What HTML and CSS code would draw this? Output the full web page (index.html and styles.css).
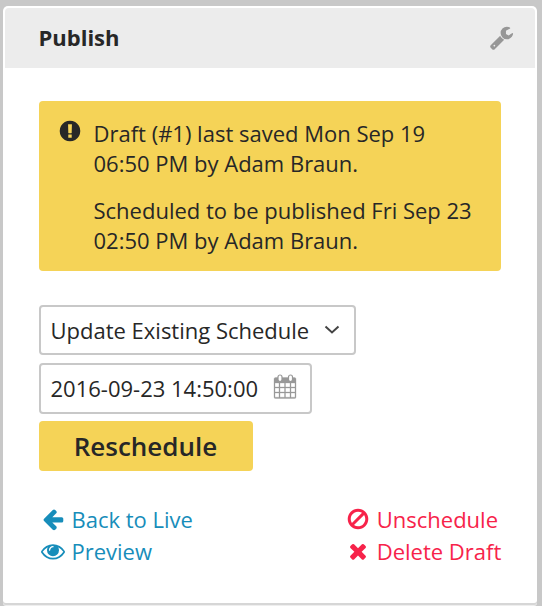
FILE: index.html
```html
<!DOCTYPE html>
<html lang="en">
<head>
<meta charset="utf-8">
<title>Publish</title>
<link rel="stylesheet" href="styles.css">
</head>
<body>
<section class="panel">
  <header class="panel-head">
    <h2>Publish</h2>
    <svg class="wrench" viewBox="0 0 1792 1792"><path d="M448 1472q0-26-19-45t-45-19-45 19-19 45 19 45 45 19 45-19 19-45zm644-420l-682 682q-37 37-90 37-52 0-91-37l-106-108q-38-36-38-90 0-53 38-91l681-681q39 98 114.500 173.500t173.500 114.500zm634-435q0 39-23 106-47 134-164.500 217.500t-258.500 83.500q-185 0-316.500-131.500t-131.500-316.500 131.500-316.500 316.500-131.500q58 0 121.500 16.500t107.500 46.500q16 11 16 28t-16 28l-293 169v224l193 107q5-3 79-48.500t135.500-81 70.500-35.500q15 0 23.500 10t8.500 25z"/></svg>
  </header>
  <div class="panel-body">
    <div class="alert">
      <svg class="alert-icon" viewBox="0 0 1792 1792"><path d="M896 128q209 0 385.500 103t279.500 279.500 103 385.500-103 385.500-279.500 279.500-385.500 103-385.500-103-279.500-279.500-103-385.500 103-385.500 279.500-279.500 385.500-103zm128 1247v-190q0-14-9-23.500t-22-9.500h-192q-13 0-23 10t-10 23v190q0 13 10 23t23 10h192q13 0 22-9.500t9-23.500zm-2-344l18-621q0-12-10-18-10-8-24-8h-220q-14 0-24 8-10 6-10 18l17 621q0 10 10 17.500t24 7.500h185q14 0 23.500-7.500t10.500-17.500z"/></svg>
      <div class="alert-text">
        <p>Draft (#1) last saved Mon Sep 19<br>06:50 PM by Adam Braun.</p>
        <p>Scheduled to be published Fri Sep 23<br>02:50 PM by Adam Braun.</p>
      </div>
    </div>
    <div class="field select">
      <span>Update Existing Schedule</span>
      <svg class="chevron" viewBox="0 0 16 10"><path d="M1.500 1.500 8 7.500 14.500 1.500"/></svg>
    </div>
    <div class="field date">
      <span>2016-09-23 14:50:00</span>
      <svg class="calendar" viewBox="0 0 24 26">
        <path class="cal-frame" fill-rule="evenodd" d="M2.500 3.500h19a1.500 1.500 0 0 1 1.500 1.500v18a1.500 1.500 0 0 1-1.500 1.500h-19A1.500 1.500 0 0 1 1 23V5a1.500 1.500 0 0 1 1.500-1.500zM2 9v4h4V9zM7 9v4h4.500V9zM12.500 9v4H17V9zM18 9v4h4V9zM2 14v4h4v-4zM7 14v4h4.500v-4zM12.500 14v4H17v-4zM18 14v4h4v-4zM2 19v4.200h4V19zM7 19v4.200h4.500V19zM12.500 19v4.200H17V19zM18 19v4.200h4V19z"/>
        <rect class="cal-ring" x="5" y="1" width="4" height="6.500" rx="2"/>
        <rect class="cal-ring" x="15.500" y="1" width="4" height="6.500" rx="2"/>
      </svg>
    </div>
    <button class="primary" type="button">Reschedule</button>
    <div class="links">
      <div class="link-col safe">
        <a><svg viewBox="0 0 1792 1792"><path d="M1664 896v128q0 53-32.500 90.500t-84.500 37.500h-704l293 294q38 36 38 90t-38 90l-75 76q-37 37-90 37-52 0-91-37l-651-652q-37-37-37-90 0-52 37-91l651-650q38-38 91-38 52 0 90 38l75 74q38 38 38 91t-38 91l-293 293h704q52 0 84.500 37.500t32.500 90.500z"/></svg><span>Back to Live</span></a>
        <a><svg viewBox="0 0 1792 1792"><path d="M1664 960q-152-236-381-353 61 104 61 225 0 185-131.500 316.500t-316.500 131.500-316.500-131.500-131.500-316.500q0-121 61-225-229 117-381 353 133 205 333.500 326.500t434.500 121.500 434.500-121.500 333.500-326.500zm-720-384q0-20-14-34t-34-14q-125 0-214.500 89.500t-89.500 214.500q0 20 14 34t34 14 34-14 14-34q0-86 61-147t147-61q20 0 34-14t14-34zm848 384q0 34-20 69-140 230-376.500 368.500t-499.500 138.500-499.500-139-376.500-368q-20-35-20-69t20-69q140-229 376.500-368t499.500-139 499.500 139 376.500 368q20 35 20 69z"/></svg><span>Preview</span></a>
      </div>
      <div class="link-col danger">
        <a><svg viewBox="0 0 1792 1792"><path d="M1440 893q0-161-87-295l-754 753q137 89 297 89 111 0 211.500-43.500t173.500-116.500 116-174.500 43-212.500zm-999 299l755-754q-135-91-300-91-148 0-273 73t-198 199-73 274q0 162 89 299zm1223-299q0 157-61 300t-163.500 246-245 164-298.500 61-298.500-61-245-164-163.500-246-61-300 61-299.500 163.500-245.500 245-164 298.500-61 298.500 61 245 164 163.500 245.500 61 299.500z"/></svg><span>Unschedule</span></a>
        <a><svg viewBox="0 0 1792 1792"><path d="M1490 1322q0 40-28 68l-136 136q-28 28-68 28t-68-28l-294-294-294 294q-28 28-68 28t-68-28l-136-136q-28-28-28-68t28-68l294-294-294-294q-28-28-28-68t28-68l136-136q28-28 68-28t68 28l294 294 294-294q28-28 68-28t68 28l136 136q28 28 28 68t-28 68l-294 294 294 294q28 28 28 68z"/></svg><span>Delete Draft</span></a>
      </div>
    </div>
  </div>
</section>
</body>
</html>
```
FILE: styles.css
```css
* { box-sizing: border-box; }
html, body { height: 606px; overflow: hidden; }
body {
  margin: 0;
  padding: 6px 5px 0 3px;
  background: #c8c8c8;
  color: #272727;
  font: 22px/30px "Open Sans", sans-serif;
}
.panel {
  height: 597px;
  padding: 2px;
  background: #fff;
  border-radius: 5px 5px 3px 3px;
  box-shadow: 0 2px 0 #d6d6d6, 0 3px 0 #eee;
}
.panel-head {
  display: flex;
  align-items: center;
  justify-content: space-between;
  height: 60px;
  padding: 0 21px 2px 33.5px;
  background: #ececec;
  border-radius: 4px 4px 0 0;
}
h2 { margin: 0; font-size: 22px; line-height: 30px; font-weight: 700; }
.wrench { width: 25px; height: 25px; fill: #979797; }
.panel-body {
  display: flex;
  flex-direction: column;
  align-items: flex-start;
  padding: 33px 34px 0;
}
.alert {
  display: flex;
  width: 462px;
  height: 170px;
  padding: 17px 0 0 19px;
  background: #f5d357;
  border-radius: 4px;
}
.alert-icon { flex: none; width: 24px; height: 24px; margin: 1px 11.5px 0 0; fill: #272727; }
.alert-text { white-space: nowrap; }
p { margin: 0 0 17px; }
.field {
  display: flex;
  align-items: center;
  border: 2px solid #c8c8c8;
  border-radius: 4px;
  padding-left: 9.5px;
  white-space: nowrap;
}
.select { width: 317px; height: 50px; margin-top: 34px; }
.date { width: 273px; height: 51px; margin-top: 8px; padding-bottom: 2px; }
.chevron { width: 16px; height: 10px; margin-left: 14.5px; fill: none; stroke: #444; stroke-width: 2; }
.calendar { width: 24px; height: 26px; margin: 0 0 2px 14.5px; }
.cal-frame { fill: #989898; stroke: #989898; stroke-width: 0.3; }
.cal-ring { fill: #fff; stroke: #989898; stroke-width: 1.2; }
.primary {
  width: 214px;
  height: 50px;
  margin-top: 7px;
  padding: 0 1px 0 0;
  border: 0;
  border-radius: 4px;
  background: #f5d357;
  color: #272727;
  font: 600 26px/50px "Open Sans", sans-serif;
}
.links { display: flex; justify-content: space-between; width: 462px; margin-top: 32px; }
.link-col a { display: flex; align-items: center; height: 32px; white-space: nowrap; }
.link-col svg { width: 24px; height: 24px; fill: currentColor; }
.safe { margin-left: 2px; color: #178dba; }
.safe svg { margin-right: 6.5px; }
.danger { margin-right: -0.3px; color: #f7234a; }
.danger svg { margin-right: 6.6px; }
```
